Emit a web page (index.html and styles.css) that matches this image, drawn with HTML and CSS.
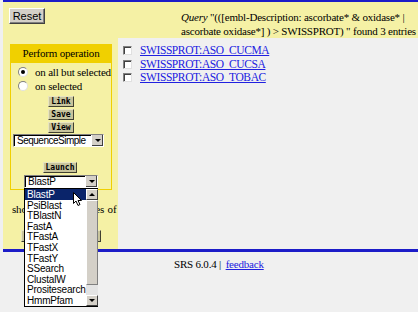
FILE: index.html
```html
<!DOCTYPE html>
<html lang="en">
<head>
    <meta charset="UTF-8">
    <title>SRS Query Results</title>
    <link rel="stylesheet" href="styles.css">
</head>
<body>
<div class="page">
    <div class="rule"></div>
    <div class="header">
        <button class="reset">Reset</button>
        <div class="query"><i>Query</i> "(([embl-Description: ascorbate* &amp; oxidase* |<br>ascorbate oxidase*] ) &gt; SWISSPROT) " found 3 entries</div>
    </div>

    <div class="main">
        <div class="sidebar">
            <div class="panel">
                <div class="panel-title">Perform operation</div>
                <div class="panel-body">
                    <div class="radio-row"><span class="radio checked"></span>on all but selected</div>
                    <div class="radio-row"><span class="radio"></span>on selected</div>
                    <div class="op-buttons">
                        <button class="op">Link</button>
                        <button class="op">Save</button>
                        <button class="op">View</button>
                    </div>
                    <div class="select wide"><span class="select-text">SequenceSimple</span><span class="arrow"></span></div>
                    <div class="launch-row"><button class="op">Launch</button></div>
                    <div class="select-wrap">
                        <div class="select narrow"><span class="select-text">BlastP</span><span class="arrow"></span></div>
                        <div class="dropdown">
                            <ul class="options">
                                <li class="active">BlastP</li>
                                <li>PsiBlast</li>
                                <li>TBlastN</li>
                                <li>FastA</li>
                                <li>TFastA</li>
                                <li>TFastX</li>
                                <li>TFastY</li>
                                <li>SSearch</li>
                                <li>ClustalW</li>
                                <li>Prositesearch</li>
                                <li>HmmPfam</li>
                            </ul>
                            <div class="scrollbar">
                                <span class="sb-btn up"></span>
                                <span class="sb-thumb"></span>
                                <span class="sb-btn down"></span>
                            </div>
                            <svg class="cursor" width="10" height="15" viewBox="0 0 10 15">
                                <path d="M0.5 0.5 L0.5 11.5 L3 9 L5 13.5 L7 12.5 L5 8.5 L8.5 8.5 Z" fill="#fff" stroke="#000" stroke-width="1"/>
                            </svg>
                        </div>
                    </div>
                </div>
            </div>
            <p class="showing">showing 1 - 3 entries of</p>
            <button class="op show-btn">Show entries</button>
        </div>

        <div class="content">
            <div class="entry"><span class="check"></span><a href="#">SWISSPROT:ASO_CUCMA</a></div>
            <div class="entry"><span class="check"></span><a href="#">SWISSPROT:ASO_CUCSA</a></div>
            <div class="entry"><span class="check"></span><a href="#">SWISSPROT:ASO_TOBAC</a></div>
        </div>
    </div>

    <div class="rule bottom"></div>
    <div class="footer">SRS 6.0.4 | <a href="#">feedback</a></div>
</div>
</body>
</html>
```

FILE: styles.css
```css
html, body {
    min-height: 312px;
}
body {
    margin: 0;
    background: #f0f0f0;
    font-family: "Liberation Serif", serif;
    font-size: 11px;
    letter-spacing: -0.2px;
    color: #000;
}
.page {
    margin-left: 3px;
    min-height: 312px;
}
.rule {
    height: 2px;
    background: #1c1cc8;
}
.rule.bottom {
    height: 3px;
}
.header {
    height: 36px;
    background: #f5f1a5;
    display: flex;
    align-items: flex-start;
}
.reset {
    margin: 6px 0 0 6px;
    width: 36px;
    height: 16px;
    padding: 0;
    background: #d4d0c8;
    border: 1px solid;
    border-color: #fff #404040 #404040 #fff;
    box-shadow: inset -1px -1px 0 #808080;
    font-family: "Liberation Sans", sans-serif;
    font-size: 11px;
    letter-spacing: 0;
    color: #000;
}
.query {
    margin: 8px 0 0 136px;
    line-height: 14px;
    white-space: nowrap;
}
.main {
    display: flex;
    height: 211px;
}
.sidebar {
    width: 115px;
    background: #f5f1a5;
    padding-top: 6px;
    box-sizing: border-box;
}
.panel {
    margin-left: 7px;
    width: 102px;
    border: 1px solid #f0d000;
    border-top: none;
    box-sizing: border-box;
}
.panel-title {
    height: 19px;
    line-height: 19px;
    background: #f0d000;
    text-align: center;
}
.panel-body {
    padding: 2px 0 1px 2px;
}
.radio-row {
    display: flex;
    align-items: center;
    height: 14px;
    padding-left: 5px;
    white-space: nowrap;
}
.radio {
    flex: none;
    width: 10px;
    height: 10px;
    border-radius: 50%;
    background: #fff;
    border: 1px solid;
    border-color: #808080 #e0e0e0 #e0e0e0 #808080;
    box-sizing: border-box;
    margin-right: 7px;
    position: relative;
}
.radio.checked::after {
    content: "";
    position: absolute;
    left: 2px;
    top: 2px;
    width: 4px;
    height: 4px;
    border-radius: 50%;
    background: #000;
}
.op-buttons {
    display: flex;
    flex-direction: column;
    align-items: center;
    gap: 2px;
    margin-top: 3px;
    padding-right: 2px;
}
.op {
    height: 11px;
    padding: 0 2px;
    background: #c8c49c;
    border: 1px solid;
    border-color: #e8e4c0 #404030 #404030 #e8e4c0;
    font-family: "DejaVu Sans Mono", monospace;
    font-weight: bold;
    font-size: 8px;
    line-height: 9px;
    letter-spacing: 0;
    color: #000;
}
.select {
    display: flex;
    height: 13px;
    background: #fff;
    border: 1px solid;
    border-color: #808080 #fff #fff #808080;
    box-shadow: inset 1px 1px 0 #000;
    box-sizing: border-box;
    font-family: "Liberation Sans", sans-serif;
    font-size: 10px;
    letter-spacing: -0.2px;
    line-height: 11px;
}
.select.wide {
    width: 91px;
    margin-top: 1px;
    letter-spacing: -0.5px;
}
.select.narrow {
    width: 74px;
}
.select-text {
    flex: 1;
    padding: 0 0 0 3px;
    white-space: nowrap;
    overflow: hidden;
}
.arrow {
    flex: none;
    width: 11px;
    background: #d4d0c8;
    border-left: 1px solid #fff;
    box-shadow: inset -1px -1px 0 #404040;
    position: relative;
}
.arrow::after {
    content: "";
    position: absolute;
    left: 3px;
    top: 4px;
    border: 3px solid transparent;
    border-top: 3px solid #000;
    border-bottom: none;
}
.launch-row {
    display: flex;
    justify-content: center;
    margin-top: 15px;
    padding-right: 4px;
}
.select-wrap {
    position: relative;
    margin: 2px 0 0 11px;
}
.dropdown {
    position: absolute;
    left: 0;
    top: 13px;
    width: 74px;
    height: 119px;
    background: #fff;
    border: 1px solid #000;
    box-sizing: border-box;
    display: flex;
    z-index: 2;
}
.options {
    list-style: none;
    margin: 0;
    padding: 0;
    flex: 1;
    font-family: "Liberation Sans", sans-serif;
    font-size: 10px;
    letter-spacing: -0.2px;
}
.options li {
    height: 10.6px;
    line-height: 11px;
    padding-left: 2px;
    white-space: nowrap;
    overflow: hidden;
}
.options li.active {
    background: #0a246a;
    color: #fff;
}
.scrollbar {
    flex: none;
    width: 12px;
    display: flex;
    flex-direction: column;
    background: #e4e4e4;
}
.sb-btn {
    flex: none;
    height: 11px;
    background: #d4d0c8;
    border: 1px solid;
    border-color: #fff #404040 #404040 #fff;
    box-sizing: border-box;
    position: relative;
}
.sb-btn::after {
    content: "";
    position: absolute;
    left: 2px;
    top: 3px;
    border: 3px solid transparent;
}
.sb-btn.up::after {
    border-bottom: 3px solid #000;
    border-top: none;
}
.sb-btn.down::after {
    border-top: 3px solid #000;
    border-bottom: none;
}
.sb-thumb {
    flex: 1;
    margin-bottom: 10px;
    background: #d4d0c8;
    border: 1px solid;
    border-color: #fff #808080 #808080 #fff;
    box-sizing: border-box;
}
.cursor {
    position: absolute;
    left: 48px;
    top: 3px;
}
.showing {
    margin: 12px 0 0 0;
    padding-left: 9px;
    line-height: 14px;
    white-space: nowrap;
    word-spacing: 1px;
}
.show-btn {
    display: block;
    margin: 14px 0 0 18px;
    width: 80px;
    height: 12px;
}
.content {
    flex: 1;
    padding: 6px 0 0 5px;
}
.entry {
    display: flex;
    align-items: center;
    height: 13.5px;
}
.check {
    flex: none;
    width: 9px;
    height: 9px;
    background: #fff;
    border: 1px solid;
    border-color: #808080 #e0e0e0 #e0e0e0 #808080;
    box-shadow: inset 1px 1px 0 #404040;
    box-sizing: border-box;
    margin-right: 8px;
}
.entry a {
    font-size: 11.5px;
    letter-spacing: -0.4px;
    line-height: 13px;
}
a {
    color: #2020e0;
}
.footer {
    padding: 5px 0 0 171px;
    line-height: 14px;
}
.footer a {
    margin-left: 2px;
}
```
